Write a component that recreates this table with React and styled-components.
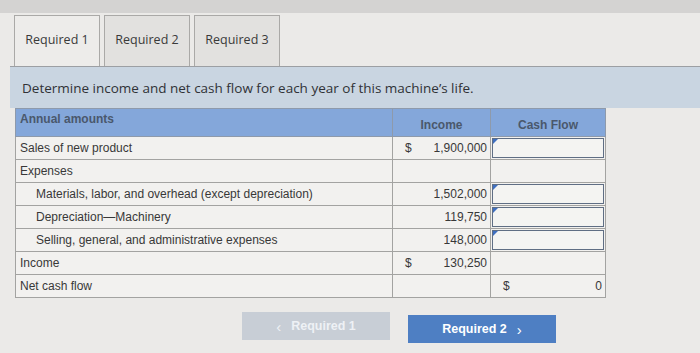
import React from 'react';
import styled, { createGlobalStyle } from 'styled-components';

const Global = createGlobalStyle`
  html, body {
    margin: 0;
    padding: 0;
    background: #ebeae8;
  }
  body {
    width: 700px;
    height: 353px;
    overflow: hidden;
    font-family: "Liberation Sans", Arial, sans-serif;
  }
`;

const TopBand = styled.div`
  height: 13px;
  background: #d4d3d2;
`;

const TabRow = styled.div`
  display: flex;
  gap: 4px;
  padding-left: 14px;
  height: 53px;
  align-items: flex-end;
`;

const Tab = styled.div`
  width: 86px;
  height: 51px;
  box-sizing: border-box;
  padding-bottom: 4px;
  border: 1px solid #aaa9a7;
  border-bottom: none;
  background: ${p => (p.active ? '#edecea' : '#e2e1df')};
  display: flex;
  align-items: center;
  justify-content: center;
  font-family: "Open Sans", sans-serif;
  font-size: 12.5px;
  color: #3a3a3a;
`;

const Instruction = styled.div`
  margin-left: 10px;
  height: 42px;
  box-sizing: border-box;
  border-top: 1px solid #9c9fa3;
  background: #c9d5e1;
  display: flex;
  align-items: center;
  padding-left: 12px;
  font-family: "Open Sans", sans-serif;
  font-size: 13.5px;
  color: #303236;
`;

const Table = styled.table`
  margin-left: 15px;
  width: 590px;
  border-collapse: collapse;
  table-layout: fixed;
  font-size: 12px;
  color: #383838;
`;

const HeadCell = styled.th`
  height: 22px;
  background: #84a7da;
  color: #4a586c;
  font-weight: bold;
  font-size: 12px;
  text-align: ${p => p.align || 'center'};
  padding: ${p => (p.valign === 'top' ? '3px 4px 0' : '5px 4px 0')};
  border: 1px solid #8e9aab;
  vertical-align: ${p => p.valign || 'middle'};
`;

const LabelCell = styled.td`
  height: 22px;
  padding: 0 0 0 ${p => (p.indent ? '20px' : '4px')};
  background: #f2f1ef;
  border: 1px solid #a3a3a1;
  white-space: nowrap;
`;

const ValueCell = styled.td`
  height: 22px;
  padding: 0;
  background: #f2f1ef;
  border: 1px solid #a3a3a1;
  position: relative;
`;

const Amount = styled.div`
  display: flex;
  justify-content: space-between;
  align-items: center;
  padding: 0 3px 0 12px;
`;

const Input = styled.div`
  position: absolute;
  inset: 1px;
  border: 1.5px solid #5f6e84;
  background: #f4f4f2;
`;

const Marker = styled.span`
  position: absolute;
  top: 2px;
  left: 2px;
  width: 0;
  height: 0;
  border-top: 5px solid #3f6fc0;
  border-right: 5px solid transparent;
  z-index: 1;
`;

const Footer = styled.div`
  display: flex;
  gap: 18px;
  padding: 14px 0 0 242px;
`;

const Button = styled.div`
  width: 148px;
  height: 28px;
  display: flex;
  align-items: center;
  justify-content: center;
  gap: 10px;
  font-weight: bold;
  font-size: 12.5px;
  background: ${p => (p.disabled ? '#c8ced6' : '#4e7fc3')};
  color: ${p => (p.disabled ? '#eef1f5' : '#ffffff')};
  margin-top: ${p => (p.disabled ? '0' : '3px')};
`;

const Arrow = styled.span`
  font-size: 15px;
  font-weight: normal;
  line-height: 1;
`;

const rows = [
  { label: 'Sales of new product', dollar: true, income: '1,900,000', input: true },
  { label: 'Expenses' },
  { label: 'Materials, labor, and overhead (except depreciation)', indent: true, income: '1,502,000', input: true },
  { label: 'Depreciation\u2014Machinery', indent: true, income: '119,750', input: true },
  { label: 'Selling, general, and administrative expenses', indent: true, income: '148,000', input: true },
  { label: 'Income', dollar: true, income: '130,250' },
  { label: 'Net cash flow', cash: '0' },
];

export default function App() {
  return (
    <>
      <Global />
      <TopBand />
      <TabRow>
        <Tab active>Required 1</Tab>
        <Tab>Required 2</Tab>
        <Tab>Required 3</Tab>
      </TabRow>
      <Instruction>Determine income and net cash flow for each year of this machine’s life.</Instruction>
      <Table>
        <colgroup>
          <col style={{ width: 377 }} />
          <col style={{ width: 98 }} />
          <col style={{ width: 115 }} />
        </colgroup>
        <thead>
          <tr>
            <HeadCell align="left" valign="top">Annual amounts</HeadCell>
            <HeadCell>Income</HeadCell>
            <HeadCell>Cash Flow</HeadCell>
          </tr>
        </thead>
        <tbody>
          {rows.map(r => (
            <tr key={r.label}>
              <LabelCell indent={r.indent}>{r.label}</LabelCell>
              <ValueCell>
                {r.income && (
                  <Amount>
                    <span>{r.dollar ? '$' : ''}</span>
                    <span>{r.income}</span>
                  </Amount>
                )}
              </ValueCell>
              <ValueCell>
                {r.input && (
                  <>
                    <Marker />
                    <Input />
                  </>
                )}
                {r.cash && (
                  <Amount>
                    <span>$</span>
                    <span>{r.cash}</span>
                  </Amount>
                )}
              </ValueCell>
            </tr>
          ))}
        </tbody>
      </Table>
      <Footer>
        <Button disabled>
          <Arrow>&lsaquo;</Arrow>
          <span>Required 1</span>
        </Button>
        <Button>
          <span>Required 2</span>
          <Arrow>&rsaquo;</Arrow>
        </Button>
      </Footer>
    </>
  );
}
